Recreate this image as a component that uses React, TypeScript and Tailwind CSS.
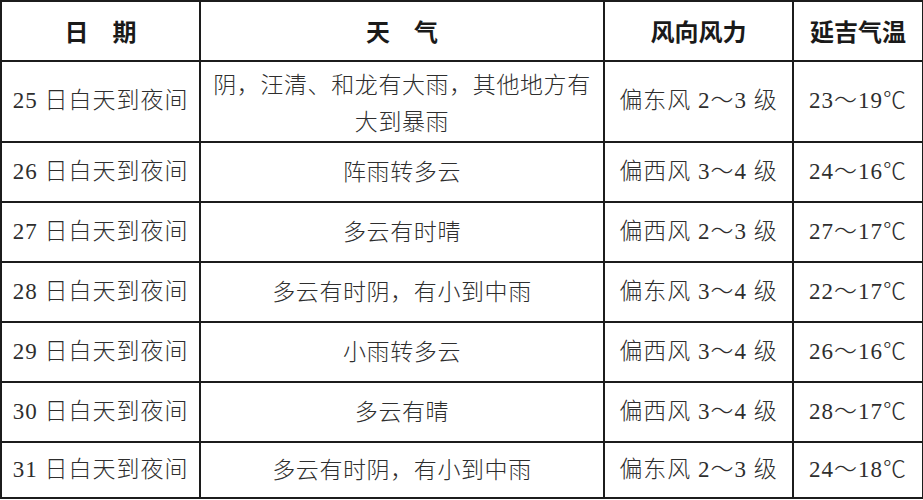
import React from 'react';

interface Row {
  date: string;
  weather: string;
  wind: string;
  temp: string;
}

const rows: Row[] = [
  { date: '25日白天到夜间', weather: '阴，汪清、和龙有大雨，其他地方有大到暴雨', wind: '偏东风 2～3 级', temp: '23～19℃' },
  { date: '26日白天到夜间', weather: '阵雨转多云', wind: '偏西风 3～4 级', temp: '24～16℃' },
  { date: '27日白天到夜间', weather: '多云有时晴', wind: '偏西风 2～3 级', temp: '27～17℃' },
  { date: '28日白天到夜间', weather: '多云有时阴，有小到中雨', wind: '偏东风 3～4 级', temp: '22～17℃' },
  { date: '29日白天到夜间', weather: '小雨转多云', wind: '偏西风 3～4 级', temp: '26～16℃' },
  { date: '30日白天到夜间', weather: '多云有晴', wind: '偏西风 3～4 级', temp: '28～17℃' },
  { date: '31日白天到夜间', weather: '多云有时阴，有小到中雨', wind: '偏东风 2～3 级', temp: '24～18℃' },
];

const bodyFont = "font-['Liberation_Serif','Noto_Sans_CJK_SC',serif]";
const cell = 'border-2 border-[#1c1c1c] text-center';

const App: React.FC = () => {
  return (
    <div className="bg-white w-[923px] h-[500px] overflow-hidden">
      <table className="table-fixed border-collapse w-[922px] text-[#2e2e2e]">
        <colgroup>
          <col className="w-[199px]" />
          <col className="w-[404px]" />
          <col className="w-[189px]" />
          <col className="w-[130px]" />
        </colgroup>
        <thead>
          <tr className="h-[60px] font-['Noto_Sans_CJK_SC',sans-serif] font-medium text-[24px] text-[#1a1a1a]">
            <th className={cell}>日　期</th>
            <th className={cell}>天　气</th>
            <th className={cell}>风向风力</th>
            <th className={cell}>延吉气温</th>
          </tr>
        </thead>
        <tbody className={`${bodyFont} font-light text-[23px] tracking-[1px]`}>
          {rows.map((r, i) => {
            const num = r.date.slice(0, 2);
            const rest = r.date.slice(2);
            return (
              <tr key={r.date} className={i === 0 ? 'h-[81px]' : i === rows.length - 1 ? 'h-[56px]' : 'h-[60px]'}>
                <td className={cell}>
                  {num} {rest}
                </td>
                <td className={`${cell} px-2 leading-[37px] tracking-[0.6px] ${i === 0 ? 'pt-1' : ''}`}>
                  {r.weather}
                </td>
                <td className={cell}>{r.wind}</td>
                <td className={cell}>{r.temp}</td>
              </tr>
            );
          })}
        </tbody>
      </table>
    </div>
  );
};

export default App;
